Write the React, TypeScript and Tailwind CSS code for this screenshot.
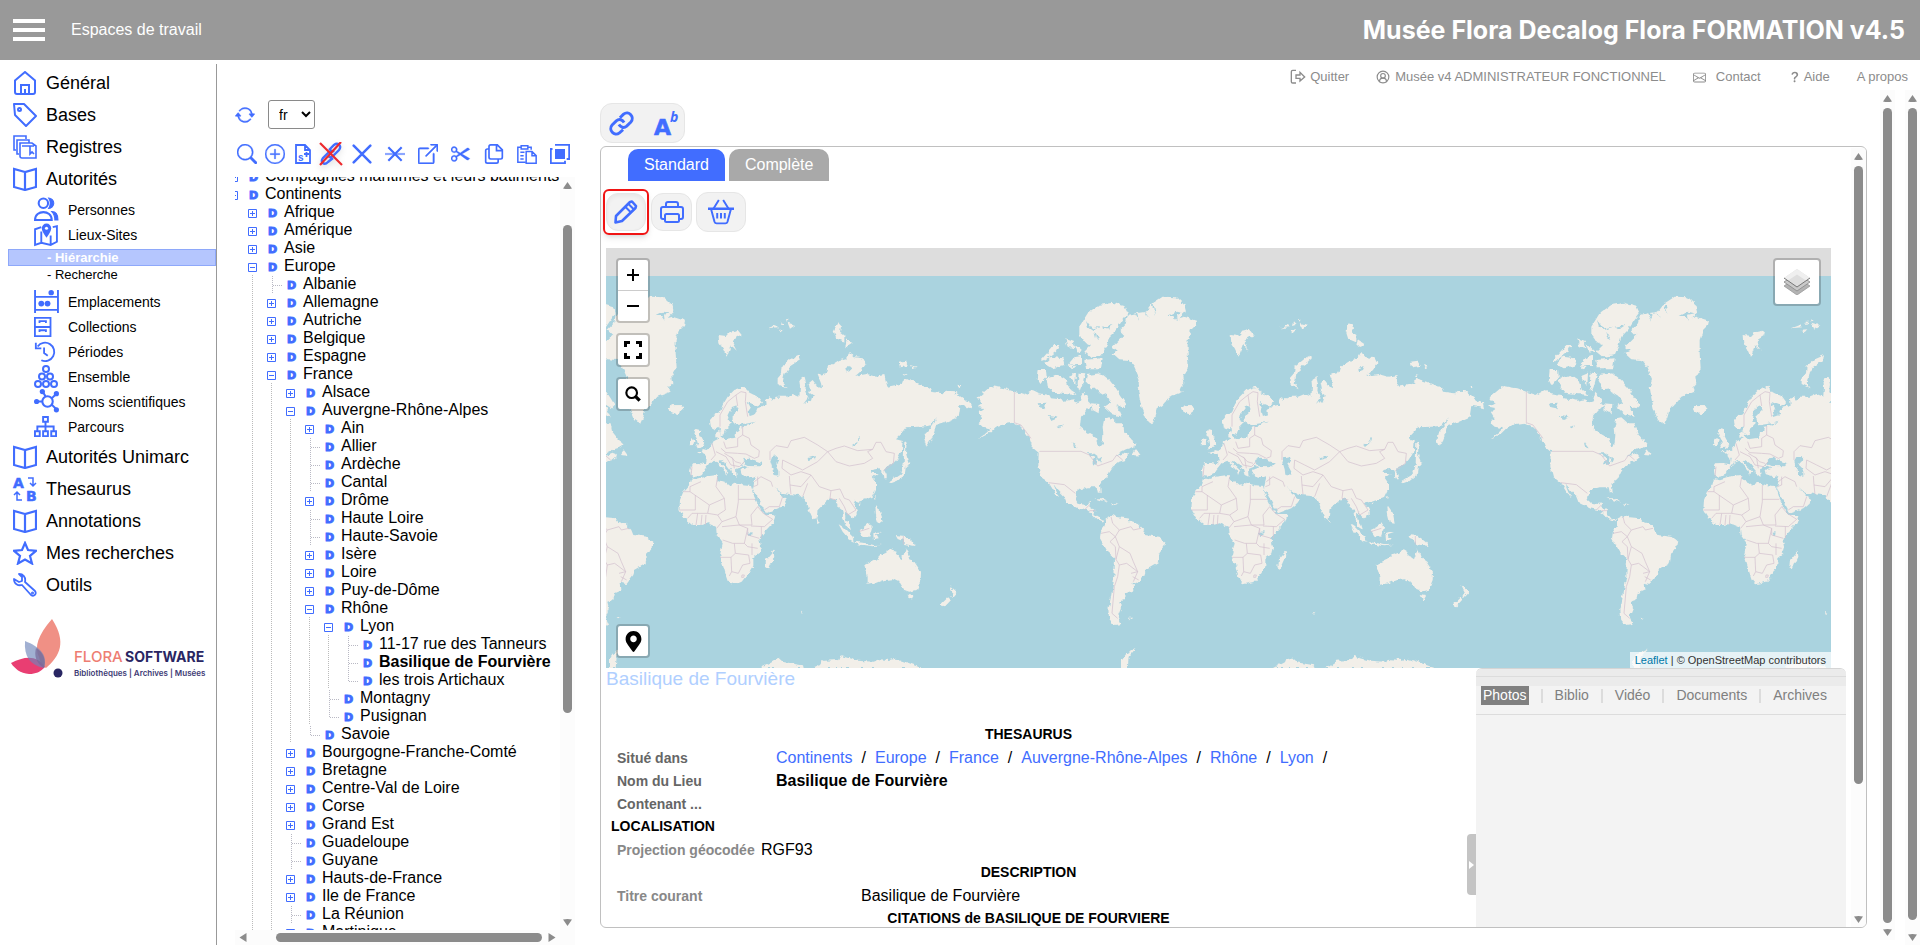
import React from 'react';
import clsx from 'clsx';
import { CircleUserRound } from 'lucide-react';
import {
  BsArrowRepeat,
  BsBoxArrowUpRight,
  BsEnvelope,
  BsPlusCircle,
  BsQuestionLg,
  BsScissors,
  BsSearch,
} from 'react-icons/bs';
import { FaMapMarkerAlt } from 'react-icons/fa';

interface IconProps {
  children: React.ReactNode;
  className?: string;
  width?: number;
}

const Icon: React.FC<IconProps> = ({ children, className = 'size-6', width = 2 }) => (
  <svg viewBox="0 0 24 24" fill="none" stroke="currentColor" strokeWidth={width} className={className} aria-hidden="true">
    {children}
  </svg>
);

const HomeIcon = () => (
  <Icon>
    <path d="M2 9.5 12 1l10 8.500V21a2 2 0 0 1-2 2H4a2 2 0 0 1-2-2Z" />
    <path d="M8 23v-9h8v9M12 23v-5" />
  </Icon>
);

const TagIcon = () => (
  <Icon>
    <path d="M1 1h10l12 12-10 10L2 12Z" strokeLinejoin="round" />
    <circle cx="6.500" cy="6.500" r="1.500" />
  </Icon>
);

const RegistersIcon = () => (
  <Icon width={1.6}>
    <path d="M3 15H1V1h12v3M6 19H4V5h12v3" />
    <path d="M7 21V8h12l4 3v12H9a2 2 0 0 1-2-2ZM9 11h12M17 11v8l2-2 2 2" />
  </Icon>
);

const BookIcon = () => (
  <Icon width={2.2}>
    <path d="M12 5 1 2v18l11 3 11-3V2ZM12 5v18" />
  </Icon>
);

const PeopleIcon = () => (
  <Icon className="size-[25px]">
    <circle cx="9" cy="6" r="4.500" />
    <path d="M1 22c0-10 16-10 16 0Z" />
    <path d="M14 1a5 5 0 1 1 0 10c2-3 2-7 0-10ZM17 14c5 0 6 4 6 8h-3c0-4-1-6-3-8Z" fill="currentColor" strokeWidth="1" />
  </Icon>
);

const MapIcon = () => (
  <Icon className="size-[25px]" width={1.8}>
    <path d="M7 5 1 7v15l6-2 9 2 6-3V4l-4 1M7 9v11M16 13v9" />
    <path d="M12 15C9 11 7.500 8.500 7.500 6a4.500 4.500 0 0 1 9 0c0 2.500-1.500 5-4.500 9Z" fill="currentColor" stroke="none" />
    <circle cx="12" cy="6" r="1.500" fill="white" stroke="none" />
  </Icon>
);

const ShelfIcon = () => (
  <Icon className="size-[25px]" width={1.8}>
    <path d="M1 1v22M23 1v22M1 7.500h22M1 20h22" />
    <circle cx="16.500" cy="3.500" r="2.600" fill="currentColor" stroke="none" />
    <circle cx="7" cy="14" r="2.800" fill="currentColor" stroke="none" />
    <circle cx="13" cy="14" r="2.800" fill="currentColor" stroke="none" />
  </Icon>
);

const CabinetIcon = () => (
  <Icon className="size-[22px]" width={2}>
    <path d="M1 2h17v20H1zM1 12h17M6 7.500V5.500h7v2M6 17.500v-2h7v2" />
  </Icon>
);

const HistoryIcon = () => (
  <Icon className="size-[22px]">
    <path d="M4 6a10 10 0 1 1 4 15M11 7v6l4 3M2 2v6h6" />
  </Icon>
);

const EnsembleIcon = () => (
  <Icon className="size-[24px]">
    <circle cx="12" cy="4" r="3" />
    <circle cx="8" cy="11.500" r="3" />
    <circle cx="16" cy="11.500" r="3" />
    <circle cx="4" cy="19" r="3" />
    <circle cx="12" cy="19" r="3" />
    <circle cx="20" cy="19" r="3" />
  </Icon>
);

const MoleculeIcon = () => (
  <Icon className="size-[25px]">
    <circle cx="13" cy="12" r="5" />
    <path d="M2 12h6M8 2l3 5M17 9l5-5M17 15l5 5" />
    <g fill="currentColor" stroke="none">
      <circle cx="2.500" cy="12" r="2.500" />
      <circle cx="8" cy="2.500" r="2.500" />
      <circle cx="21.500" cy="4.500" r="2.500" />
      <circle cx="21.500" cy="20" r="2.500" />
    </g>
  </Icon>
);

const SitemapIcon = () => (
  <Icon className="size-[23px]">
    <path d="M9.500 2h5v5h-5zM1 17h5v5H1zM9.500 17h5v5h-5zM18 17h5v5h-5zM12 7v10M3.500 17v-5h17v5" />
  </Icon>
);

const AlphaIcon = () => (
  <svg viewBox="0 0 24 24" className="size-6 overflow-visible" fill="currentColor" aria-hidden="true">
    <text x="0" y="11" fontSize="14" fontWeight="700" stroke="currentColor" strokeWidth=".5" fontFamily="DejaVu Sans, sans-serif">A</text>
    <text x="13" y="24" fontSize="14" fontWeight="700" stroke="currentColor" strokeWidth=".5" fontFamily="DejaVu Sans, sans-serif">B</text>
    <path d="M15 1h5v8m-3-3 3 3 3-3M9 23H4v-8m-3 3 3-3 3 3" fill="none" stroke="currentColor" strokeWidth="1.500" />
  </svg>
);

const StarIcon = () => (
  <Icon width={2.2}>
    <path d="m12 2 3 7 8 .8-6 5.200 2 7.500-7-4-7 4 2-7.500-6-5.200L9 9Z" />
  </Icon>
);

const WrenchIcon = () => (
  <Icon width={1.8}>
    <path d="M6 1 9 4v4L6 9 1 6c0 5 4 7 8 6l9 10c3 2 6-1 4-4L12 9c1-5-2-8-6-8Z" strokeLinejoin="round" />
    <circle cx="19.500" cy="20" r=".6" />
  </Icon>
);

const FloraLogo = () => (
  <svg viewBox="0 0 200 62" className="w-[200px] overflow-visible" role="img" aria-label="Flora Software">
    <path d="M41 0C27 16 23 28 28 38c1 6 4 9 7 11 14-12 21-26 6-49Z" fill="#ee8478" opacity=".9" />
    <path d="M0 44c14-7 26-8 34 4-5 5-9 7-16 7C9 54 4 50 0 44Z" fill="#e93e72" />
    <path d="M14 22c15 6 23 14 19 27-14-3-20-11-19-27Z" fill="#6f86ba" opacity=".65" />
    <path d="M25 29c8 5 10 12 8 20-8-5-10-12-8-20Z" fill="#766a98" opacity=".7" />
    <circle cx="47" cy="54" r="4.500" fill="#292663" />
    <text x="63" y="43" fontSize="15" fontWeight="500" fontFamily="Inter, sans-serif" fill="#ee7d72">FLORA</text>
    <text x="114" y="43" fontSize="14" fontWeight="700" fontFamily="Inter, sans-serif" fill="#292663">SOFTWARE</text>
    <text x="63" y="57" fontSize="8" fontWeight="600" fontFamily="Inter, sans-serif" fill="#3d3a74">Bibliothèques | Archives | Musées</text>
  </svg>
);

interface MenuEntry {
  label: string;
  icon: React.ReactNode;
}

const mainMenu: MenuEntry[] = [
  { label: 'Général', icon: <HomeIcon /> },
  { label: 'Bases', icon: <TagIcon /> },
  { label: 'Registres', icon: <RegistersIcon /> },
  { label: 'Autorités', icon: <BookIcon /> },
];

const authorityMenu: MenuEntry[] = [
  { label: 'Emplacements', icon: <ShelfIcon /> },
  { label: 'Collections', icon: <CabinetIcon /> },
  { label: 'Périodes', icon: <HistoryIcon /> },
  { label: 'Ensemble', icon: <EnsembleIcon /> },
  { label: 'Noms scientifiques', icon: <MoleculeIcon /> },
  { label: 'Parcours', icon: <SitemapIcon /> },
];

const lowerMenu: MenuEntry[] = [
  { label: 'Autorités Unimarc', icon: <BookIcon /> },
  { label: 'Thesaurus', icon: <AlphaIcon /> },
  { label: 'Annotations', icon: <BookIcon /> },
  { label: 'Mes recherches', icon: <StarIcon /> },
  { label: 'Outils', icon: <WrenchIcon /> },
];

const MainItem: React.FC<MenuEntry> = ({ label, icon }) => (
  <a href="#" className="flex h-8 items-center gap-[9px] pl-[13px] text-[18px]">
    <span className="text-[#416dff]">{icon}</span>
    {label}
  </a>
);

const SubItem: React.FC<MenuEntry> = ({ label, icon }) => (
  <a href="#" className="flex h-[25px] items-center pl-[34px] text-sm">
    <span className="w-[34px] text-[#416dff]">{icon}</span>
    {label}
  </a>
);

const Sidebar = () => (
  <nav className="mt-1 w-[217px] shrink-0 border-r border-[#999] pt-[3px]">
    {mainMenu.map((item) => <MainItem key={item.label} {...item} />)}
    <div className="pt-0.5 pb-px">
      <SubItem label="Personnes" icon={<PeopleIcon />} />
      <SubItem label="Lieux-Sites" icon={<MapIcon />} />
    </div>
    <a href="#" className="ml-2 mt-px block h-[17px] border border-[#8ea8fa] bg-[#b5c6fe] pl-[38px] text-[13px] leading-[15px] font-bold text-white">
      - Hiérarchie
    </a>
    <a href="#" className="block h-[17px] pl-[47px] text-[13px] leading-[17px]">- Recherche</a>
    <div className="pt-1.5 pb-0.5">
      {authorityMenu.map((item) => <SubItem key={item.label} {...item} />)}
    </div>
    {lowerMenu.map((item) => <MainItem key={item.label} {...item} />)}
    <div className="pt-[18px] pl-[11px]"><FloraLogo /></div>
  </nav>
);

interface ScrollbarProps {
  className?: string;
  thumb: string;
}

const Scrollbar: React.FC<ScrollbarProps> = ({ className, thumb }) => (
  <div className={clsx('flex w-[15px] shrink-0 flex-col items-center gap-1.5 bg-[#fcfcfc] py-1', className)} aria-hidden="true">
    <svg viewBox="0 0 9 7" className="mt-px h-[7px] w-[9px] fill-[#8b8b8b]"><path d="M4.500 0 9 6.500Q4.500 7.500 0 6.500Z" /></svg>
    <div className="w-[9px] flex-1">
      <div className={clsx('w-full rounded-full bg-[#8b8b8b]', thumb)} />
    </div>
    <svg viewBox="0 0 9 7" className="h-[7px] w-[9px] fill-[#8b8b8b]"><path d="M4.500 7 9 .5Q4.500-.5 0 .5Z" /></svg>
  </div>
);

// kind: + collapsed, - expanded, | leaf, L last leaf
type NodeKind = '+' | '-' | '|' | 'L';

const tree: [number, NodeKind, string][] = [
  [0, '+', 'Compagnies maritimes et leurs bâtiments'],
  [0, '-', 'Continents'],
  [1, '+', 'Afrique'],
  [1, '+', 'Amérique'],
  [1, '+', 'Asie'],
  [1, '-', 'Europe'],
  [2, '|', 'Albanie'],
  [2, '+', 'Allemagne'],
  [2, '+', 'Autriche'],
  [2, '+', 'Belgique'],
  [2, '+', 'Espagne'],
  [2, '-', 'France'],
  [3, '+', 'Alsace'],
  [3, '-', 'Auvergne-Rhône-Alpes'],
  [4, '+', 'Ain'],
  [4, '|', 'Allier'],
  [4, '|', 'Ardèche'],
  [4, '|', 'Cantal'],
  [4, '+', 'Drôme'],
  [4, '|', 'Haute Loire'],
  [4, '|', 'Haute-Savoie'],
  [4, '+', 'Isère'],
  [4, '+', 'Loire'],
  [4, '+', 'Puy-de-Dôme'],
  [4, '-', 'Rhône'],
  [5, '-', 'Lyon'],
  [6, '|', '11-17 rue des Tanneurs'],
  [6, '|', 'Basilique de Fourvière'],
  [6, 'L', 'les trois Artichaux'],
  [5, '|', 'Montagny'],
  [5, 'L', 'Pusignan'],
  [4, 'L', 'Savoie'],
  [3, '+', 'Bourgogne-Franche-Comté'],
  [3, '+', 'Bretagne'],
  [3, '+', 'Centre-Val de Loire'],
  [3, '+', 'Corse'],
  [3, '+', 'Grand Est'],
  [3, '|', 'Guadeloupe'],
  [3, '|', 'Guyane'],
  [3, '+', 'Hauts-de-France'],
  [3, '+', 'Ile de France'],
  [3, '|', 'La Réunion'],
  [3, '+', 'Martinique'],
];

const Toggle = ({ kind }: { kind: NodeKind }) => {
  if (kind === '+' || kind === '-') {
    return (
      <svg viewBox="0 0 20 18" className="h-[18px] w-5 shrink-0" fill="none" stroke="#416dff" aria-hidden="true">
        <path d={kind === '+' ? 'M.5 6.500h8v8h-8zM2 10.500h5M4.500 8v5' : 'M.5 6.500h8v8h-8zM2 10.500h5'} />
      </svg>
    );
  }
  return (
    <svg viewBox="0 0 20 18" className="h-[18px] w-5 shrink-0" fill="none" stroke="#b9b9c4" strokeDasharray="1 1" aria-hidden="true">
      <path d={kind === 'L' ? 'M5.500 1v9M6 10.500h10' : 'M5.500 1v17M6 10.500h10'} />
    </svg>
  );
};

const TreeRow = ({ level, kind, label }: { level: number; kind: NodeKind; label: string }) => (
  <li className="flex h-[18px] whitespace-nowrap">
    {Array.from({ length: level }, (_, i) => (
      <span key={i} className="w-[19px] shrink-0 pl-1">
        {i > 0 && <span className="block h-[17px] w-0 border-l border-dotted border-[#bbb]" />}
      </span>
    ))}
    <Toggle kind={kind} />
    <span className="w-4 shrink-0 pt-[3px] font-['DejaVu_Sans'] text-[11px] leading-4 font-bold text-[#416dff] [-webkit-text-stroke:1px_#416dff]">D</span>
    <a href="#" className={clsx('text-base leading-[18px]', label === 'Basilique de Fourvière' && 'font-bold')}>{label}</a>
  </li>
);

const ToolButton = ({ label, wide, children }: { label: string; wide?: boolean; children: React.ReactNode }) => (
  <button aria-label={label} className={clsx('flex h-7 shrink-0 items-center justify-center', wide ? 'w-[33px]' : 'w-7')}>
    {children}
  </button>
);

const TreePanel = () => (
  <section className="flex w-[358px] shrink-0 flex-col pt-2.5 pl-[18px]">
    <div className="flex h-[29px] items-center gap-[13px]">
      <button aria-label="Actualiser" className="text-[#416dff]"><BsArrowRepeat size={20} strokeWidth={0.4} stroke="currentColor" /></button>
      <select aria-label="Langue" defaultValue="fr" className="h-[29px] w-[47px] rounded-[3px] border border-[#8a8a8a] bg-white pl-1.5 text-sm">
        <option>fr</option>
      </select>
    </div>
    <div className="-ml-0.5 mt-[11px] flex h-7 text-[#416dff]">
      <ToolButton label="Rechercher"><BsSearch size={20} strokeWidth={0.3} stroke="currentColor" /></ToolButton>
      <ToolButton label="Ajouter"><BsPlusCircle size={20} strokeWidth={0.3} stroke="currentColor" /></ToolButton>
      <ToolButton label="Ajouter un synonyme">
        <svg viewBox="0 0 16 20" className="h-5 w-4" fill="none" stroke="currentColor" strokeWidth="1.800" aria-hidden="true">
          <path d="M1 1h9l5 5v13H1ZM10 1v5h5M9 10h5M11.500 8v5" />
          <text x="3" y="17" fontSize="10" fontWeight="700" fill="currentColor" stroke="none">s</text>
        </svg>
      </ToolButton>
      <ToolButton label="Délier">
        <Icon className="size-6 drop-shadow-md" width={2.4}>
          <path d="m10 8 5-5c4-3 8 1 5 5l-6 6c-2 2-4 1-5 0M14 16l-5 4c-4 4-8 0-5-4l6-6c2-2 4-1 5 0" />
          <path d="m1 1 22 22M22 0 1 23" stroke="#ec2a2e" strokeWidth="2.200" />
        </Icon>
      </ToolButton>
      <ToolButton label="Supprimer" wide>
        <Icon className="size-5" width={3}><path d="m2 2 20 20M22 2 2 22" strokeLinecap="round" /></Icon>
      </ToolButton>
      <ToolButton label="Supprimer la branche" wide>
        <Icon className="size-5" width={2.6}>
          <path d="m4 4 16 16M20 4 4 20" />
          <path d="M0 12h24" opacity=".6" />
        </Icon>
      </ToolButton>
      <ToolButton label="Ouvrir" wide><BsBoxArrowUpRight size={20} strokeWidth={0.5} stroke="currentColor" /></ToolButton>
      <ToolButton label="Couper" wide><BsScissors size={20} strokeWidth={0.3} stroke="currentColor" className="rotate-90" /></ToolButton>
      <ToolButton label="Copier" wide>
        <Icon className="size-5" width={2}>
          <path d="M8 1h8l6 6v9a2 2 0 0 1-2 2H8a2 2 0 0 1-2-2V3a2 2 0 0 1 2-2ZM15 1v7h7M6 6H4a2 2 0 0 0-2 2v13a2 2 0 0 0 2 2h11a2 2 0 0 0 2-2v-3" />
        </Icon>
      </ToolButton>
      <ToolButton label="Coller" wide>
        <Icon className="size-5" width={1.8}>
          <path d="M10 22H1V4h4M13 4h4v3M5 2h8v4H5zM4 10h5M4 14h4M4 18h4M11 9h7l5 5v9H11zM18 9v5h5" />
        </Icon>
      </ToolButton>
      <ToolButton label="Dupliquer" wide>
        <Icon className="size-5" width={2.2}>
          <path d="M6 1h17v17h-3M3 6H1v17h17v-3" />
          <path d="M6 6h12v12H6z" fill="currentColor" stroke="none" />
        </Icon>
      </ToolButton>
    </div>
    <div className="mt-[9px] flex min-h-0 flex-1">
      <ul className="-mb-px min-w-0 flex-1 overflow-hidden">
        <li className="-mt-2.5 -ml-1.5">
          <ul>
            {tree.map(([level, kind, label]) => <TreeRow key={label} level={level} kind={kind} label={label} />)}
          </ul>
        </li>
      </ul>
      <Scrollbar thumb="mt-[30px] h-[68%]" />
    </div>
    <div className="z-10 flex h-[15px] shrink-0 items-center gap-1.5 bg-[#fcfcfc] pr-[19px] pl-1" aria-hidden="true">
      <svg viewBox="0 0 7 9" className="h-[9px] w-2 fill-[#8b8b8b]"><path d="M0 4.500 7 0v9Z" /></svg>
      <div className="ml-[23px] h-[9px] flex-1 rounded-full bg-[#8b8b8b]" />
      <svg viewBox="0 0 7 9" className="h-[9px] w-2 fill-[#8b8b8b]"><path d="M7 4.500 0 0v9Z" /></svg>
    </div>
  </section>
);

const land = [
  // Eurasia
  'M44 588 42 570 48 550 68 549 90 553 92 535 85 524 75 520 62 517 78 515 80 507 92 510 102 500 108 487 120 480 132 475 118 472 118 460 130 452 135 470 145 478 165 475 178 473 180 455 190 450 192 440 215 436 240 425 215 430 178 436 170 420 170 405 188 388 184 378 168 384 158 405 155 420 168 428 152 445 146 462 134 466 130 440 118 448 104 440 102 420 115 405 130 400 140 375 155 350 175 330 205 320 218 337 245 350 258 368 245 378 215 366 225 385 218 395 222 408 240 402 238 390 250 380 272 374 270 357 282 352 287 362 300 350 330 350 350 342 370 350 372 320 370 300 385 290 390 310 388 335 398 355 385 372 405 362 410 345 400 338 402 330 398 310 410 300 425 320 438 325 435 310 425 285 450 280 455 262 490 240 510 235 522 215 535 232 560 235 568 250 555 270 535 288 570 282 600 290 625 285 634 320 660 315 680 310 685 296 700 300 715 305 745 318 758 320 765 335 800 340 810 332 835 334 855 350 868 360 885 370 888 385 870 380 850 378 845 410 810 425 780 435 775 455 765 480 752 500 745 480 750 460 775 430 782 412 765 435 755 438 730 440 690 442 675 460 660 475 680 480 678 510 665 535 650 553 632 560 624 570 632 585 632 595 622 595 620 575 608 566 590 570 585 578 605 580 590 590 600 605 600 630 590 650 570 658 548 665 540 662 530 668 545 690 545 705 530 715 520 705 507 695 508 718 520 735 525 750 510 740 502 715 498 690 485 680 480 660 465 655 450 665 425 690 422 715 410 718 400 695 392 665 380 655 370 645 345 643 315 638 300 625 292 615 315 645 335 658 325 672 310 685 270 700 262 685 245 655 228 625 232 605 238 588 220 592 198 586 194 570 215 562 200 555 205 530 198 560 180 568 182 590 170 585 165 570 150 550 135 540 128 545 145 560 157 572 150 588 146 572 125 550 118 542 100 550 84 570 78 582 60 590Z',
  // Africa, Madagascar
  'M45 595 60 598 85 590 122 585 125 600 145 606 160 618 175 608 200 616 225 618 235 650 250 680 265 705 298 705 290 730 265 755 250 775 255 800 250 820 232 835 232 860 220 880 200 905 165 913 155 900 148 880 143 860 132 825 140 790 122 765 120 740 95 730 75 735 48 735 25 715 10 690 12 660 22 635 40 615Z',
  'M293 812 295 830 278 868 268 862 270 840Z',
  // Great Britain, Ireland, Iceland
  'M60 447 72 450 72 465 80 480 88 495 78 503 60 505 66 490 62 475 55 462ZM45 475 56 478 52 495 38 496ZM1515 382 1525 376 1550 376 1558 388 1540 402 1520 395ZM-21 382-11 376 14 376 22 388 4 402-16 395Z',
  // Arctic islands
  'M128 165 150 168 162 155 185 150 197 165 175 178 170 190 182 212 165 195 152 230 140 205 130 190ZM275 145 300 135 306 142ZM315 135 318 124 326 132ZM330 115 338 120 332 125ZM335 128 358 135 342 146ZM305 150 322 148 314 157ZM485 130 495 140 492 155 505 165 505 185 480 175 473 152ZM512 178 530 190 508 205ZM372 226 370 240 340 260 325 285 320 310 332 325 305 312 305 295 318 280 320 258 345 238ZM668 245 690 242 698 258 672 262ZM705 255 722 260 710 265ZM845 315 858 315 850 322ZM680 282 692 285 684 290Z',
  // East Asia and Oceania islands
  'M685 482 692 488 690 520 697 545 705 550 690 558 686 585 665 602 645 610 637 605 660 590 676 580 683 555ZM488 733 500 740 530 770 533 785 520 778 500 755ZM532 785 560 788 590 795 618 794 590 799 545 793ZM548 750 565 742 580 730 588 742 580 770 560 768ZM592 760 605 755 618 756 600 762 608 778 594 780ZM660 765 690 768 712 785 722 798 700 795 685 792 680 780 665 774ZM598 675 605 685 615 700 620 728 605 725 600 705ZM548 672 553 666 552 676ZM600 648 597 658 594 652ZM422 715 430 725 424 730Z',
  'M565 855 600 838 612 825 628 820 645 808 662 812 660 825 678 838 690 805 700 835 715 845 735 875 734 900 722 930 700 935 685 930 672 908 650 898 625 900 600 910 575 914 575 890ZM698 945 714 948 706 962ZM820 915 842 935 825 955 830 935ZM818 950 825 957 802 982 792 976Z',
  // North America
  'M905 352 925 335 945 318 985 325 1015 335 1045 345 1070 330 1090 340 1120 345 1125 355 1150 358 1165 362 1195 358 1200 368 1215 362 1222 335 1235 350 1240 368 1248 375 1230 393 1215 410 1212 440 1235 460 1262 475 1270 500 1280 490 1282 465 1280 440 1285 415 1300 412 1320 430 1340 430 1345 455 1365 480 1378 490 1375 500 1350 508 1330 518 1318 530 1345 518 1355 522 1355 532 1345 540 1330 545 1310 560 1300 575 1288 600 1272 612 1274 640 1265 635 1262 622 1235 622 1205 630 1200 655 1210 672 1232 675 1242 662 1240 680 1258 692 1255 705 1280 720 1290 715 1280 725 1262 718 1245 700 1230 690 1205 685 1172 668 1165 650 1145 630 1132 612 1150 655 1143 648 1118 608 1095 590 1087 560 1088 515 1070 500 1060 475 1035 440 1010 428 985 432 960 440 940 460 905 478 930 460 945 445 920 440 908 430 920 415 908 395 925 385 903 380 920 370Z',
  'M1368 525 1378 508 1392 527ZM1255 655 1275 655 1300 668 1270 660ZM1305 670 1325 673 1310 676Z',
  'M1310 200 1330 180 1345 165 1330 150 1350 130 1355 105 1380 100 1410 95 1430 70 1460 50 1500 52 1525 75 1530 95 1510 115 1525 110 1563 122 1560 135 1545 150 1535 180 1535 220 1538 265 1522 290 1525 310 1512 325 1520 335 1480 350 1460 375 1445 385 1438 410 1428 433 1410 420 1398 390 1390 350 1385 320 1392 300 1375 260 1360 240 1330 238 1310 220 1325 212Z',
  'M1210 140 1235 100 1270 75 1310 68 1345 78 1355 100 1340 120 1320 150 1300 170 1290 200 1280 225 1245 232 1225 215 1245 195 1225 185 1210 165ZM1225 240 1280 235 1275 265 1230 265ZM1195 232 1215 228 1215 255 1175 255ZM1168 178 1190 185 1195 205 1175 200ZM1195 190 1220 212 1205 218ZM1135 195 1150 195 1140 215 1100 245 1095 240ZM1105 250 1125 230 1160 235 1165 255 1130 265ZM1175 255 1200 258 1185 265Z',
  'M1085 270 1110 270 1112 290 1090 315 1082 300ZM1112 295 1150 285 1170 298 1182 330 1205 345 1165 342 1130 338 1115 318ZM1180 288 1200 280 1198 315 1185 300ZM1208 278 1228 280 1220 310 1210 335 1205 312ZM1235 285 1275 280 1300 300 1320 325 1340 355 1352 375 1342 385 1322 372 1340 412 1310 402 1285 380 1305 368 1290 340 1275 345 1265 325 1245 328 1232 305ZM1245 370 1270 372 1268 400 1250 390Z',
  // South America
  'M1290 715 1310 705 1325 712 1355 715 1362 725 1385 732 1402 750 1408 765 1450 770 1468 785 1465 800 1450 820 1445 850 1410 870 1405 885 1385 912 1370 908 1372 930 1350 940 1345 960 1330 965 1335 985 1325 1010 1335 1035 1315 1038 1300 1020 1297 990 1305 950 1315 890 1317 835 1295 815 1272 775 1275 755 1290 735Z',
  'M1358 1013 1370 1013 1362 1018ZM375 995 382 998 377 1001Z',
  // Antarctica
  'M255 1164 285 1148 310 1133 325 1147 378 1156 380 1164ZM412 1164 445 1142 490 1140 495 1128 545 1142 590 1145 610 1138 640 1140 660 1136 700 1150 740 1164ZM1335 1164 1335 1140 1350 1120 1380 1105 1358 1130 1355 1164Z',
];

const water = [
  'M203 552 206 535 220 533 240 542 262 550 255 559 215 558Z',
  'M283 545 288 532 305 528 310 543 298 550 310 572 310 587 292 584 290 568Z',
  'M525 498 545 485 548 470 551 472 546 488 532 500ZM395 535 420 528 418 535 396 540Z',
  'M1085 370 1112 368 1105 385 1090 382ZM1115 408 1145 412 1125 420ZM1145 440 1165 436 1150 445ZM1190 485 1205 505 1195 503ZM1230 520 1250 520 1265 530 1262 555 1245 552 1255 530ZM1265 530 1278 535 1272 548ZM215 758 227 757 225 768 216 767Z',
  // fjords
  'M1475 108 1500 95 1520 100 1500 104 1502 122 1492 108ZM1405 95 1418 115 1410 98ZM1428 78 1440 105 1434 78ZM1380 102 1392 122 1386 100ZM1230 120 1248 145 1275 140 1250 150 1236 140ZM1255 155 1270 180 1260 175ZM1280 140 1310 135 1290 148ZM508 265 530 258 525 270 510 275Z',
];

const borders = [
  'M132 440V405L155 365 180 345 185 378M180 345 195 335 210 338 208 365 215 410M200 438V465L185 475V500L150 505 143 485M200 465 220 475 225 495 250 512 248 530 235 535 210 522 185 520 150 518 135 505M108 490 118 525 105 540M120 515 150 530 165 555 190 560 205 545M48 560 45 590M145 520 170 535 175 565M165 530 178 545 195 550',
  'M282 540 282 515 300 497 335 503 345 482 385 472 425 495 455 515 425 545 380 570 350 555 320 540 318 565 345 585 375 575 405 585M455 515 480 505 505 498 545 512 590 508 600 487 615 487 630 515 655 520 652 550 622 572M455 515 480 545 520 558 565 550 590 535 575 515 590 508M340 588 342 615 375 620 405 585 430 620 465 632 492 627 505 655 520 660 540 690 515 705 505 680 490 655M345 643 342 615M380 650 395 610M465 632 462 655 480 660M235 605 255 590 285 605 290 620M245 590V615L232 620M265 690 280 680 310 680 320 650',
  'M22 635H42V620L75 605M42 635 100 675 145 655 120 620 125 590M10 690H58V645M100 675 95 700 65 700 60 735M145 655 148 690 125 705 95 700M125 705 138 725 122 745M187 615V658H238M187 658V665L180 710 138 725M180 710 190 735 228 735 225 705 245 680 262 700 290 718 265 740 225 738M138 740 190 735 215 745 205 790 170 790 140 780M175 790 178 820 165 832H132M165 832 167 875 160 888M178 820 218 825 222 850 200 855 187 880 167 875M205 790 215 800 245 805M215 745V765L250 775M228 790V825M198 885 205 885 203 892 197 892ZM256 740V775M35 715 48 700 65 700M75 735 78 705M88 735 90 705',
  'M1015 335V428L1035 435 1065 475M1092 514H1215L1240 525 1265 558 1310 542 1322 525 1340 540M1118 608 1165 614 1198 640M1225 690 1240 675M1240 692 1258 692M682 768V793M548 755 580 745',
  'M1305 710 1310 730 1330 750 1318 770 1330 800 1362 820 1372 845 1385 875 1372 905M1275 760 1300 755 1318 770M1318 770 1302 785 1318 800 1320 838 1330 855 1325 890 1315 920 1308 1000 1325 1015M1330 855 1352 850 1385 875 1365 880M1330 750 1365 740 1372 750 1395 745M1320 838 1330 800M1370 890 1388 900',
];

const worldOffsets = [-442, 70, 582, 1094];

const WorldMap = () => (
  <svg className="absolute inset-0 size-full" role="img" aria-label="Carte du monde">
    <defs>
      <filter id="coast" x="0" y="0" width="100%" height="100%">
        <feTurbulence type="fractalNoise" baseFrequency=".2" numOctaves="2" seed="4" />
        <feDisplacementMap in="SourceGraphic" scale="5" xChannelSelector="R" yChannelSelector="G" />
      </filter>
      <g id="world">
        <g transform="scale(.33333)">
          {land.map((d) => <path key={d} d={d} fill="#f2efe9" />)}
          {water.map((d) => <path key={d} d={d} fill="#aad3df" />)}
        </g>
      </g>
      <g id="borders">
        <g transform="scale(.33333)">
          {borders.map((d) => <path key={d} d={d} fill="none" stroke="#d3c1cf" strokeWidth="2.200" />)}
        </g>
      </g>
    </defs>
    <rect y="28" width="100%" height="392" fill="#aad3df" />
    <g filter="url(#coast)">
      {worldOffsets.map((x) => <use key={x} href="#world" x={x} y="32" />)}
    </g>
    {worldOffsets.map((x) => <use key={x} href="#borders" x={x} y="32" />)}
  </svg>
);

const control = 'rounded border-2 border-black/20 bg-white bg-clip-padding';

const MapPanel = () => (
  <div className="relative mt-[13px] mr-5 h-[420px] shrink-0 overflow-hidden bg-[#ddd]">
    <WorldMap />
    <div className="absolute top-2.5 left-2.5 flex flex-col gap-2.5">
      <div className={clsx(control, 'flex w-[34px] flex-col')}>
        <button aria-label="Zoom avant" className="flex h-[31px] items-center justify-center border-b border-[#ccc]">
          <Icon className="size-3" width={4}><path d="M12 0v24M0 12h24" /></Icon>
        </button>
        <button aria-label="Zoom arrière" className="flex h-[30px] items-center justify-center">
          <Icon className="size-3" width={4}><path d="M0 12h24" /></Icon>
        </button>
      </div>
      <button aria-label="Plein écran" className={clsx(control, 'flex size-[34px] items-center justify-center')}>
        <Icon className="size-[18px]" width={4}><path d="M2 8V2h6M16 2h6v6M22 16v6h-6M8 22H2v-6" /></Icon>
      </button>
      <button aria-label="Rechercher sur la carte" className={clsx(control, 'flex size-[34px] items-center justify-center')}>
        <Icon className="size-4" width={3.2}>
          <circle cx="10" cy="10" r="8" />
          <path d="m16 16 6 6" strokeWidth="5" />
        </Icon>
      </button>
    </div>
    <button aria-label="Couches" className={clsx(control, 'absolute top-2.5 right-2.5 flex size-12 items-center justify-center')}>
      <svg viewBox="0 0 26 26" className="size-[26px]" aria-hidden="true">
        <path d="m0 17 13 9 13-9-13-9Z" fill="#b3b3b3" stroke="#999" strokeWidth=".8" />
        <path d="m0 13 13 9 13-9-13-9Z" fill="#c9c9c9" stroke="#888" strokeWidth=".8" />
        <path d="m0 9 13 9 13-9-13-9Z" fill="#dedede" />
        <path d="m0 9 13-9 13 9-4 2.500-9-6-9 6Z" fill="#efefef" />
        <path d="m0 9 13 9 13-9" fill="none" stroke="#777" />
      </svg>
    </button>
    <button aria-label="Marqueur" className={clsx(control, 'absolute bottom-2.5 left-2.5 flex size-[34px] items-center justify-center')}>
      <FaMapMarkerAlt size={21} />
    </button>
    <div className="absolute right-0 bottom-0 h-4 bg-white/70 px-[5px] text-[11px] leading-4 text-[#333]">
      <a href="#" className="text-[#0078a8]">Leaflet</a> | © OpenStreetMap contributors
    </div>
  </div>
);

const Row = ({ label, labelClass, children }: { label: string; labelClass: string; children?: React.ReactNode }) => (
  <div className="flex h-[23px] items-center pl-[11px]">
    <dt className={clsx('shrink-0 text-sm font-bold whitespace-nowrap', labelClass)}>{label}</dt>
    <dd className="flex items-center gap-[9px] text-base">{children}</dd>
  </div>
);

const Heading = ({ children }: { children: React.ReactNode }) => (
  <h2 className="h-[23px] pr-[25px] text-center text-sm leading-[23px] font-bold">{children}</h2>
);

const path = ['Continents', 'Europe', 'France', 'Auvergne-Rhône-Alpes', 'Rhône', 'Lyon'];

const Details = () => (
  <div className="min-w-0 flex-1 pt-px">
    <h1 className="h-[54px] text-[19px] leading-5 text-[#b0cfff]">Basilique de Fourvière</h1>
    <Heading>THESAURUS</Heading>
    <dl>
      <Row label="Situé dans" labelClass="w-[159px] text-[#666]">
        {path.map((place) => (
          <React.Fragment key={place}>
            <a href="#" className="text-[#416dff]">{place}</a>
            <span>/</span>
          </React.Fragment>
        ))}
      </Row>
      <Row label="Nom du Lieu" labelClass="w-[159px] text-[#666]"><b>Basilique de Fourvière</b></Row>
      <Row label="Contenant ..." labelClass="w-[159px] text-[#666]" />
    </dl>
    <h2 className="h-[23px] pl-[5px] text-sm leading-[23px] font-bold">LOCALISATION</h2>
    <dl><Row label="Projection géocodée" labelClass="w-[144px] text-[#888]">RGF93</Row></dl>
    <Heading>DESCRIPTION</Heading>
    <dl><Row label="Titre courant" labelClass="w-[244px] text-[#888]">Basilique de Fourvière</Row></dl>
    <Heading>CITATIONS de BASILIQUE DE FOURVIERE</Heading>
  </div>
);

const MediaPanel = () => (
  <aside className="relative mr-[5px] w-[370px] shrink-0 rounded-t-md border-t border-[#d5d5d5] bg-[#f3f3f3]">
    <div className="h-2 rounded-t-md border-b border-[#dcdcdc] bg-[#ebebeb]" />
    <div className="h-[9px] bg-[#ebebeb]" />
    <div className="flex h-[29px] items-start border-b border-[#dcdcdc] pl-[5px] text-sm leading-[19px] text-[#808080]">
      <button className="bg-[#808080] px-0.5 text-white">Photos</button>
      {['Biblio', 'Vidéo', 'Documents', 'Archives'].map((tab) => (
        <React.Fragment key={tab}>
          <span className="mx-3 mt-[3px] h-3.5 w-0.5 bg-[#dcdcdc]" />
          <button>{tab}</button>
        </React.Fragment>
      ))}
    </div>
    <button aria-label="Replier le panneau" className="absolute top-[165px] -left-[9px] flex h-[61px] w-[9px] items-center justify-center rounded-l bg-[#c4c4c4]">
      <svg viewBox="0 0 5 8" className="h-2 w-[5px] fill-white"><path d="m0 0 5 4-5 4Z" /></svg>
    </button>
  </aside>
);

const box = 'flex items-center rounded-xl border border-[#e6e6e6] bg-[#f2f2f2] text-[#416dff]';

const RecordPanel = () => (
  <section className="mb-[17px] ml-[25px] flex min-w-0 flex-1 flex-col pt-[13px]">
    <div className={clsx(box, 'h-10 w-[85px] shrink-0 justify-between self-start pr-1 pl-2')}>
      <button aria-label="Lien">
        <Icon className="size-[25px]" width={2.8}>
          <path d="M10.500 6.500 14 3c5-4 11 3 7 7.500l-4 4c-3 2.500-6 1-7.500-1.500" />
          <path d="m13.500 18-3.500 3c-5 4-11-3-7-7.500l4-4c3-2.500 6-1 7.500 1.500" />
        </Icon>
      </button>
      <button aria-label="Caractères">
        <svg viewBox="0 0 26 26" className="size-[26px] overflow-visible" fill="currentColor" aria-hidden="true">
          <text x="0" y="25" fontSize="22" fontWeight="700" stroke="currentColor" strokeWidth=".6" fontFamily="DejaVu Sans, sans-serif">A</text>
          <text x="16" y="12" fontSize="14" fontWeight="700" fontStyle="italic" fontFamily="Open Sans, sans-serif">b</text>
        </svg>
      </button>
    </div>
    <div className="mt-[3px] flex min-h-0 flex-1 overflow-hidden rounded-md border border-[#c0c0c0]">
      <div className="flex min-w-0 flex-1 flex-col pt-0.5 pl-[5px]">
        <div className="flex h-8 shrink-0 gap-1 pl-[22px] text-base text-white">
          <button className="rounded-t-[10px] bg-[#416dff] px-4">Standard</button>
          <button className="rounded-t-[10px] bg-[#a9a9a9] px-4">Complète</button>
        </div>
        <div className="-ml-[3px] mt-[7px] flex h-[47px] shrink-0 items-center">
          <div className="flex h-[46px] w-[46px] items-center justify-center rounded-md border-2 border-[#f01414] shadow-md">
            <button aria-label="Modifier" className={clsx(box, 'h-[38px] w-10 justify-center shadow-inner')}>
              <Icon width={2.6}>
                <path d="M1.500 22.500 2 16 16 2l2-.5L22 6l-.5 2L8 21Z" strokeLinejoin="round" />
                <path d="m11.500 7 5.500 5.500M14.500 4l5.500 5.500" strokeWidth="2" />
              </Icon>
            </button>
          </div>
          <button aria-label="Imprimer" className={clsx(box, 'ml-0.5 h-[38px] w-[41px] justify-center')}>
            <Icon>
              <path d="M6 7V4a2 2 0 0 1 2-2h8a2 2 0 0 1 2 2v3M5 19H3a2 2 0 0 1-2-2v-8a2 2 0 0 1 2-2h18a2 2 0 0 1 2 2v8a2 2 0 0 1-2 2h-2" />
              <rect x="5" y="14" width="14" height="8" rx="1.500" />
            </Icon>
          </button>
          <button aria-label="Ajouter au panier" className={clsx(box, 'ml-1 h-10 w-[50px] justify-center')}>
            <Icon className="size-[26px]" width={1.8}>
              <path d="M0 9h24" strokeWidth="2.500" />
              <path d="M3 10 6 21q.5 1.500 2 1.500h8q1.500 0 2-1.500l3-11M5 9l5-8M19 9l-5-8M8.500 13v5M12 13v5M15.500 13v5" />
            </Icon>
          </button>
        </div>
        <MapPanel />
        <div className="flex min-h-0 flex-1">
          <Details />
          <MediaPanel />
        </div>
      </div>
      <Scrollbar className="mt-px" thumb="h-[83%]" />
    </div>
  </section>
);

const TopLinks = () => (
  <div className="flex h-[30px] shrink-0 items-center justify-end gap-[27px] pt-1 pr-3 text-[13px] text-[#8c8c8c]">
    <a href="#" className="flex items-center gap-1">
      <Icon className="size-4" width={2}><path d="M9 2H4a2 2 0 0 0-2 2v15a2 2 0 0 0 2 2h5M9 9h6V5l7 7-7 6v-4H9Z" /></Icon>
      Quitter
    </a>
    <a href="#" className="flex items-center gap-[5px]"><CircleUserRound size={14} />Musée v4 ADMINISTRATEUR FONCTIONNEL</a>
    <a href="#" className="flex items-center gap-2.5"><BsEnvelope size={13} />Contact</a>
    <a href="#" className="flex items-center gap-0.5"><BsQuestionLg size={14} />Aide</a>
    <a href="#">A propos</a>
  </div>
);

export default function App() {
  return (
    <div className="flex h-screen flex-col overflow-hidden bg-white font-['Liberation_Sans',Arial,sans-serif] text-black">
      <header className="flex h-[60px] shrink-0 items-center bg-[#999] pr-[15px] pl-[13px] text-white">
        <button aria-label="Menu" className="flex w-8 flex-col gap-[5px]">
          <span className="h-1 bg-white" />
          <span className="h-1 bg-white" />
          <span className="h-1 bg-white" />
        </button>
        <a href="#" className="ml-[26px] text-base">Espaces de travail</a>
        <span className="ml-auto font-['Inter'] text-[25px] leading-7 font-bold">Musée Flora Decalog Flora FORMATION v4.5</span>
      </header>
      <div className="flex min-h-0 flex-1">
        <Sidebar />
        <div className="flex min-w-0 flex-1 flex-col">
          <TopLinks />
          <div className="flex min-h-0 flex-1">
            <TreePanel />
            <RecordPanel />
            <Scrollbar className="mb-[5px] ml-[13px]" thumb="h-full" />
            <Scrollbar className="ml-2.5" thumb="h-[99%]" />
          </div>
        </div>
      </div>
    </div>
  );
}
